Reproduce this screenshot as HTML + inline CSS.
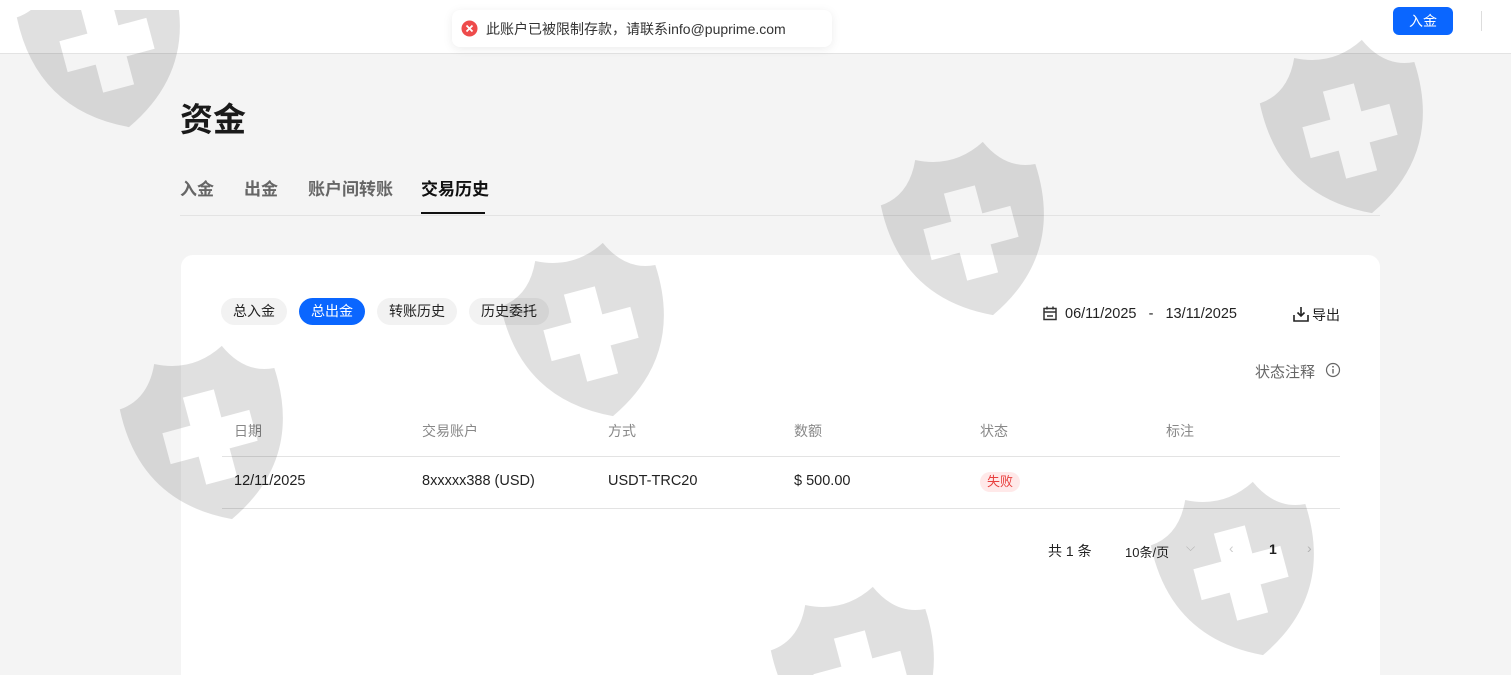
<!DOCTYPE html>
<html><head><meta charset="utf-8"><style>
*{margin:0;padding:0;box-sizing:border-box}
body{width:1511px;height:675px;overflow:hidden;background:#f4f4f4;font-family:"Liberation Sans","Noto Sans CJK SC",sans-serif;color:#222;position:relative}
.hdr{position:absolute;left:0;top:0;width:1511px;height:54px;background:#fff;border-bottom:1px solid #e3e3e3}
.btn{position:absolute;left:1393px;top:7px;width:60px;height:28px;background:#0a66ff;border-radius:6px;color:#fff;font-size:14px;text-align:center;line-height:28px}
.vl{position:absolute;left:1481px;top:11px;width:1px;height:20px;background:#ddd}
.title{position:absolute;left:180px;top:93px;font-size:33px;font-weight:bold;color:#1a1a1a}
.tab{position:absolute;top:175px;font-size:17px;color:#666;font-weight:bold}
.tab.a{color:#111}
.ul{position:absolute;left:421px;top:212px;width:64px;height:2px;background:#111}
.div{position:absolute;left:180px;top:215px;width:1200px;height:1px;background:#e3e3e3}
.card{position:absolute;left:181px;top:255px;width:1199px;height:420px;border-radius:12px 12px 0 0;background:#fff}
.pill{position:absolute;top:298px;height:27px;line-height:27px;border-radius:14px;background:#f2f2f2;font-size:14px;text-align:center;color:#222}
.pill.on{background:#0a66ff;color:#fff}
.t{position:absolute;font-size:14px;white-space:nowrap}
.th{position:absolute;top:421px;font-size:14px;color:#888}
.td{position:absolute;top:473px;font-size:14.5px;color:#222}
.line{position:absolute;left:222px;width:1118px;height:1px;background:#e3e3e3}
.toast{position:absolute;left:452px;top:10px;width:380px;height:37px;background:#fff;border-radius:8px;box-shadow:0 2px 10px rgba(0,0,0,.08);z-index:5}
.wm{position:absolute;left:0;top:10px;width:1511px;height:665px;overflow:hidden;z-index:3;pointer-events:none}
</style></head><body>
<div class="hdr"></div>
<div class="btn">入金</div>
<div class="vl"></div>
<div class="title">资金</div>
<div class="tab" style="left:180px">入金</div>
<div class="tab" style="left:244px">出金</div>
<div class="tab" style="left:308px">账户间转账</div>
<div class="tab a" style="left:421px">交易历史</div>
<div class="ul"></div>
<div class="div"></div>
<div class="card"></div>
<div class="pill" style="left:221px;width:66px">总入金</div>
<div class="pill on" style="left:299px;width:66px">总出金</div>
<div class="pill" style="left:377px;width:80px">转账历史</div>
<div class="pill" style="left:469px;width:80px">历史委托</div>
<svg style="position:absolute;left:1043px;top:306px" width="14" height="15" viewBox="0 0 14 15"><rect x="1" y="2.5" width="12" height="11" fill="none" stroke="#333" stroke-width="1.5"/><line x1="1" y1="6" x2="13" y2="6" stroke="#333" stroke-width="1.5"/><line x1="4" y1="0.5" x2="4" y2="3.5" stroke="#333" stroke-width="1.5"/><line x1="10" y1="0.5" x2="10" y2="3.5" stroke="#333" stroke-width="1.5"/><line x1="4" y1="10" x2="10" y2="10" stroke="#333" stroke-width="1.5"/></svg>
<div class="t" style="left:1065px;top:306px;font-size:14.5px">06/11/2025&nbsp;&nbsp;&nbsp;-&nbsp;&nbsp;&nbsp;13/11/2025</div>
<svg style="position:absolute;left:1293px;top:306px" width="16" height="16" viewBox="0 0 16 16"><path d="M1 9v6h14V9M8 1v9M4.5 6.5L8 10l3.5-3.5" fill="none" stroke="#222" stroke-width="1.6"/></svg>
<div class="t" style="left:1312px;top:305px">导出</div>
<div class="t" style="left:1255px;top:361px;font-size:15px;color:#666">状态注释</div>
<svg style="position:absolute;left:1325px;top:362px" width="16" height="16" viewBox="0 0 16 16"><circle cx="8" cy="8" r="6.5" fill="none" stroke="#666" stroke-width="1.2"/><line x1="8" y1="7" x2="8" y2="11.5" stroke="#666" stroke-width="1.4"/><circle cx="8" cy="4.8" r=".9" fill="#666"/></svg>
<div class="th" style="left:234px">日期</div>
<div class="th" style="left:422px">交易账户</div>
<div class="th" style="left:608px">方式</div>
<div class="th" style="left:794px">数额</div>
<div class="th" style="left:980px">状态</div>
<div class="th" style="left:1166px">标注</div>
<div class="line" style="top:456px"></div>
<div class="td" style="left:234px">12/11/2025</div>
<div class="td" style="left:422px">8xxxxx388 (USD)</div>
<div class="td" style="left:608px">USDT-TRC20</div>
<div class="td" style="left:794px">$ 500.00</div>
<div style="position:absolute;left:980px;top:472px;width:40px;height:20px;border-radius:10px;background:#ffe9e9;color:#e8403f;font-size:13px;text-align:center;line-height:20px">失败</div>
<div class="line" style="top:508px"></div>
<div class="t" style="left:1048px;top:541px;font-size:14px">共 1 条</div>
<div class="t" style="left:1125px;top:542px;font-size:13px">10条/页</div>
<div class="t" style="left:1186px;top:540px;font-size:12px;color:#ccc">⌵</div>
<div class="t" style="left:1229px;top:540px;color:#ccc">‹</div>
<div class="t" style="left:1269px;top:541px;font-weight:bold">1</div>
<div class="t" style="left:1307px;top:540px;color:#ccc">›</div>
<div class="toast">
<svg style="position:absolute;left:9px;top:10px" width="17" height="17" viewBox="0 0 17 17"><circle cx="8.5" cy="8.5" r="8" fill="#ee4b4b"/><path d="M5.5 5.5l6 6M11.5 5.5l-6 6" stroke="#fff" stroke-width="1.8"/></svg>
<div class="t" style="left:34px;top:9px;font-size:14px;color:#333">此账户已被限制存款，请联系info@puprime.com</div>
</div>
<div class="wm">
<svg width="1511" height="665" viewBox="0 10 1511 665">
<defs><path id="sh" fill-rule="evenodd" fill="rgba(0,0,0,0.12)" d="M-80,-50 Q-50,-52 -35,-85 Q0,-67 35,-85 Q50,-52 80,-50 Q85,45 0,85 Q-85,45 -80,-50 Z M-16,-45 h32 v29 h29 v32 h-29 v29 h-32 v-29 h-29 v-32 h29 z"/></defs>
<use href="#sh" transform="translate(107,45) rotate(-15)"/>
<use href="#sh" transform="translate(1350,131) rotate(-15)"/>
<use href="#sh" transform="translate(971,233) rotate(-15)"/>
<use href="#sh" transform="translate(591,334) rotate(-15)"/>
<use href="#sh" transform="translate(210,437) rotate(-15)"/>
<use href="#sh" transform="translate(1241,573) rotate(-15)"/>
<use href="#sh" transform="translate(861,678) rotate(-15)"/>
</svg>
</div>
</body></html>
